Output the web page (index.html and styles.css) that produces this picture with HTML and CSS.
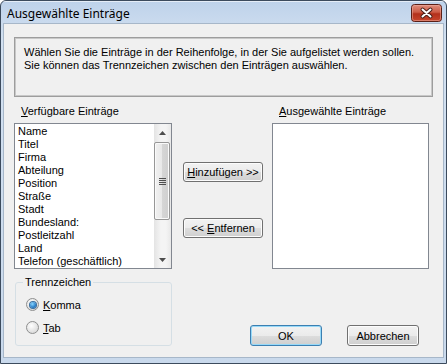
FILE: index.html
```html
<!DOCTYPE html>
<html lang="de">
<head>
  <meta charset="UTF-8">
  <title>Ausgewählte Einträge</title>
  <link rel="stylesheet" href="styles.css">
</head>
<body>
  <div class="window">
    <div class="titlebar">
      <span class="title">Ausgewählte Einträge</span>
      <svg class="close" width="31" height="18" viewBox="0 0 31 18" aria-label="Schließen">
        <defs>
          <linearGradient id="closeBg" x1="0" y1="0" x2="0" y2="1">
            <stop offset="0" stop-color="#e09080"/>
            <stop offset="0.45" stop-color="#cc5c46"/>
            <stop offset="0.55" stop-color="#b3301b"/>
            <stop offset="1" stop-color="#c9472e"/>
          </linearGradient>
        </defs>
        <rect x="0.5" y="0.5" width="30" height="17" rx="3" fill="url(#closeBg)" stroke="#5a1f16"/>
        <rect x="1.5" y="1.5" width="28" height="15" rx="2" fill="none" stroke="#f0b3a6" stroke-opacity="0.5"/>
        <path d="M11.5 5.5 L19.5 12.5 M19.5 5.5 L11.5 12.5" stroke="#4a1e18" stroke-width="4" stroke-linecap="round"/>
        <path d="M11.5 5.5 L19.5 12.5 M19.5 5.5 L11.5 12.5" stroke="#fff" stroke-width="2" stroke-linecap="round"/>
      </svg>
    </div>
    <div class="client">
      <div class="info">
        Wählen Sie die Einträge in der Reihenfolge, in der Sie aufgelistet werden sollen.<br>
        Sie können das Trennzeichen zwischen den Einträgen auswählen.
      </div>

      <div class="lists">
        <div class="label left-label"><u>V</u>erfügbare Einträge</div>
        <div></div>
        <div class="label right-label"><u>A</u>usgewählte Einträge</div>

        <div class="listbox">
          <ul class="items">
            <li>Name</li>
            <li>Titel</li>
            <li>Firma</li>
            <li>Abteilung</li>
            <li>Position</li>
            <li>Straße</li>
            <li>Stadt</li>
            <li>Bundesland:</li>
            <li>Postleitzahl</li>
            <li>Land</li>
            <li>Telefon (geschäftlich)</li>
          </ul>
          <div class="scrollbar">
            <div class="arrow">
              <svg width="7" height="4" viewBox="0 0 7 4"><path d="M0 4 L3.5 0 L7 4 Z" fill="#4d4d4d"/></svg>
            </div>
            <div class="track">
              <div class="thumb">
                <span class="grip"></span>
              </div>
            </div>
            <div class="arrow">
              <svg width="7" height="4" viewBox="0 0 7 4"><path d="M0 0 L3.5 4 L7 0 Z" fill="#4d4d4d"/></svg>
            </div>
          </div>
        </div>

        <div class="middle">
          <button class="btn move"><u>H</u>inzufügen &gt;&gt;</button>
          <button class="btn move">&lt;&lt; <u>E</u>ntfernen</button>
        </div>

        <div class="listbox empty"></div>
      </div>

      <div class="bottom">
        <fieldset class="group">
          <legend>Trennzeichen</legend>
          <label class="radio"><span class="dot checked"></span><span><u>K</u>omma</span></label>
          <label class="radio"><span class="dot"></span><span><u>T</u>ab</span></label>
        </fieldset>
        <div class="actions">
          <button class="btn default">OK</button>
          <button class="btn">Abbrechen</button>
        </div>
      </div>
    </div>
  </div>
</body>
</html>
```

FILE: styles.css
```css
body {
  margin: 0;
  padding: 0;
  background: #fff;
  font-family: 'Liberation Sans', Arial, sans-serif;
  font-size: 11px;
  color: #000;
}
.window {
  width: 447px;
  height: 364px;
  box-sizing: border-box;
  border: 1px solid #3c4b5d;
  border-radius: 6px 6px 0 0;
  background: linear-gradient(#bed2ea, #d3e1f1 40px, #c9d9ec);
  display: flex;
  flex-direction: column;
  overflow: hidden;
}
.titlebar {
  height: 23px;
  display: flex;
  align-items: flex-start;
  justify-content: space-between;
  box-shadow: inset 0 1px 0 rgba(255, 255, 255, 0.6);
}
.title {
  font-family: 'Noto Sans', 'Liberation Sans', sans-serif;
  font-size: 12px;
  line-height: 16px;
  padding: 5px 0 0 6px;
  color: #000;
}
.close {
  display: block;
  margin: 3px 4px 0 0;
}
.client {
  flex: 1;
  margin: 0 3px 6px 3px;
  background: #f0f0f0;
  box-shadow: 0 0 0 1px #a7b7c9;
}
.info {
  width: 419px;
  height: 60px;
  box-sizing: border-box;
  margin: 13px 0 0 10px;
  padding: 8px 0 0 9px;
  border: 1px solid #9d9d9d;
  box-shadow: inset 0 0 0 1px #c8c8c8;
  line-height: 13px;
}
.lists {
  display: grid;
  grid-template-columns: 158px 100px 157px;
  margin: 8px 0 0 10px;
}
.label {
  line-height: 13px;
  margin-bottom: 5px;
}
.left-label {
  padding-left: 7px;
}
.right-label {
  padding-left: 7px;
}
.listbox {
  height: 146px;
  box-sizing: border-box;
  border: 1px solid #828790;
  background: #fff;
  display: flex;
}
.items {
  flex: 1;
  list-style: none;
  margin: 0;
  padding: 1px 0 0 3px;
}
.items li {
  line-height: 13px;
  white-space: nowrap;
}
.scrollbar {
  width: 17px;
  display: flex;
  flex-direction: column;
  background: linear-gradient(90deg, #e4e4e4, #f4f4f4 40%, #f4f4f4 70%, #e8e8e8);
}
.arrow {
  height: 17px;
  display: flex;
  align-items: center;
  justify-content: center;
}
.track {
  flex: 1;
  padding-top: 1px;
}
.thumb {
  height: 78px;
  margin: 0 1px 0 0;
  box-sizing: border-box;
  border: 1px solid #979797;
  border-radius: 2px;
  background: linear-gradient(90deg, #f1f1f1, #e8e8e8 50%, #d6d6d6 51%, #cfcfcf);
  box-shadow: inset 0 0 0 1px #fafafa;
  display: flex;
  align-items: center;
  justify-content: center;
}
.grip {
  width: 7px;
  height: 7px;
  background: repeating-linear-gradient(#4f4f4f 0 1px, transparent 1px 2px);
}
.middle {
  display: flex;
  flex-direction: column;
  padding: 39px 0 0 11px;
  gap: 36px;
}
.btn {
  font-family: 'Liberation Sans', Arial, sans-serif;
  font-size: 11px;
  color: #000;
  height: 21px;
  padding: 0;
  border: 1px solid #707070;
  border-radius: 3px;
  background: linear-gradient(#f2f2f2, #ebebeb 50%, #dddddd 51%, #cfcfcf);
  box-shadow: inset 0 0 0 1px #fcfcfc;
}
.move {
  width: 80px;
  height: 20px;
}
.bottom {
  display: flex;
  align-items: flex-end;
  margin: 7px 0 0 11px;
}
.group {
  width: 157px;
  height: 70px;
  box-sizing: border-box;
  margin: 0;
  padding: 9px 0 0 10px;
  border: 1px solid #d5dfe5;
  border-radius: 3px;
}
.group legend {
  padding: 0 2px;
  margin-left: -3px;
  line-height: 13px;
}
.radio {
  display: flex;
  align-items: center;
  gap: 4px;
  height: 13px;
  margin-bottom: 10px;
}
.dot {
  width: 13px;
  height: 13px;
  box-sizing: border-box;
  border-radius: 50%;
  border: 1px solid #8e8f8f;
  background: radial-gradient(circle at 40% 35%, #ffffff, #e2e2e2 60%, #cfcfcf);
  display: flex;
  align-items: center;
  justify-content: center;
}
.dot.checked::after {
  content: '';
  width: 6px;
  height: 6px;
  border-radius: 50%;
  background: radial-gradient(circle at 40% 35%, #8ad6ff, #1b72c0 70%, #0d4f8c);
  box-shadow: 0 0 0 1px #3a6f9f;
}
.actions {
  display: flex;
  gap: 25px;
  margin-left: 78px;
}
.actions .btn {
  width: 72px;
}
.btn.default {
  border-color: #3c7fb1;
  box-shadow: inset 0 0 0 1px #97d9f8;
}
```
